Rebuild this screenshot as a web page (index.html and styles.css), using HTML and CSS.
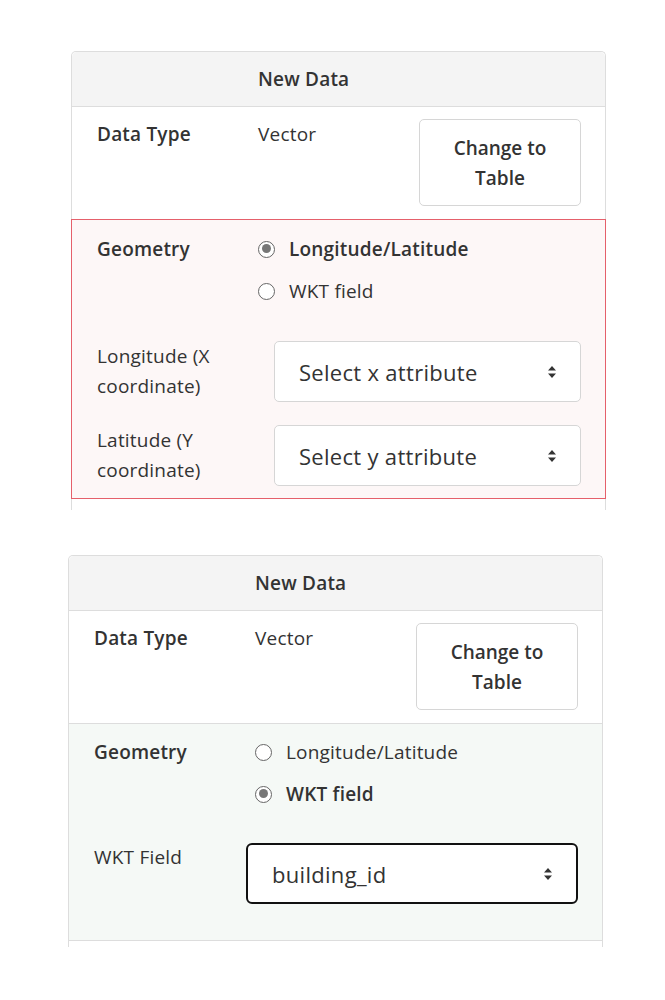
FILE: index.html
```html
<!DOCTYPE html>
<html lang="en">
<head>
    <meta charset="UTF-8">
    <title>New Data</title>
    <link rel="stylesheet" href="styles.css">
</head>
<body>
<div class="panel panel-first">
    <div class="panel-head">New Data</div>
    <div class="row-type">
        <div class="label">Data Type</div>
        <div class="value">Vector</div>
        <button class="btn">Change to<br>Table</button>
    </div>
    <div class="geom geom-error">
        <div class="geom-top">
            <div class="label">Geometry</div>
            <div class="radios">
                <div class="radio-row checked"><span class="radio"></span>Longitude/Latitude</div>
                <div class="radio-row"><span class="radio"></span>WKT field</div>
            </div>
        </div>
        <div class="field">
            <div class="field-label">Longitude (X<br>coordinate)</div>
            <div class="select">Select x attribute
                <svg class="arrows" width="10" height="14" viewBox="0 0 10 14"><path d="M5 1L9 5.5H1Z M5 13L9 8.5H1Z" fill="#333"/></svg>
            </div>
        </div>
        <div class="field">
            <div class="field-label">Latitude (Y<br>coordinate)</div>
            <div class="select">Select y attribute
                <svg class="arrows" width="10" height="14" viewBox="0 0 10 14"><path d="M5 1L9 5.5H1Z M5 13L9 8.5H1Z" fill="#333"/></svg>
            </div>
        </div>
    </div>
    <div class="panel-tail"></div>
</div>

<div class="panel panel-second">
    <div class="panel-head">New Data</div>
    <div class="row-type">
        <div class="label">Data Type</div>
        <div class="value">Vector</div>
        <button class="btn">Change to<br>Table</button>
    </div>
    <div class="geom geom-ok">
        <div class="geom-top">
            <div class="label">Geometry</div>
            <div class="radios">
                <div class="radio-row"><span class="radio"></span>Longitude/Latitude</div>
                <div class="radio-row checked"><span class="radio"></span>WKT field</div>
            </div>
        </div>
        <div class="field field-wkt">
            <div class="field-label">WKT Field</div>
            <div class="select select-focus">building_id
                <svg class="arrows" width="10" height="14" viewBox="0 0 10 14"><path d="M5 1L9 5.5H1Z M5 13L9 8.5H1Z" fill="#333"/></svg>
            </div>
        </div>
    </div>
    <div class="panel-tail"></div>
</div>
</body>
</html>
```

FILE: styles.css
```css
* {
    margin: 0;
    padding: 0;
    box-sizing: border-box;
}

body {
    font-family: "Open Sans", Lato, sans-serif;
    font-size: 19px;
    letter-spacing: 0.2px;
    color: #333;
    background: #fff;
}

.panel {
    width: 535px;
    border: 1px solid #ddd;
    border-bottom: none;
    border-radius: 5px 5px 0 0;
}

.panel-first {
    margin: 51px 0 0 71px;
}

.panel-second {
    margin: 45px 0 0 68px;
}

.panel-head {
    height: 55px;
    line-height: 54px;
    padding-left: 186px;
    font-weight: 600;
    background-color: #f4f4f4;
    border-bottom: 1px solid #ddd;
    border-radius: 5px 5px 0 0;
}

.row-type {
    display: flex;
    align-items: flex-start;
    padding: 12px 24px 12px 25px;
    height: 112px;
}

.label {
    width: 161px;
    font-weight: 600;
    line-height: 30px;
}

.value {
    flex: 1;
    line-height: 30px;
}

.btn {
    width: 162px;
    height: 87px;
    font: inherit;
    font-weight: 600;
    color: #333;
    line-height: 30px;
    background: #fff;
    border: 1px solid #d6d6d6;
    border-radius: 5px;
}

.geom {
    padding: 14px 24px 12px 25px;
}

.geom-error {
    background-color: #fdf7f7;
    border: 1px solid #e5606b;
    margin: 0 -1px;
}

.geom-ok {
    background-color: #f5f9f6;
    border-top: 1px solid #ddd;
    border-bottom: 1px solid #ddd;
    padding-top: 13px;
    padding-bottom: 36px;
}

.geom-top {
    display: flex;
}

.radio-row {
    display: flex;
    align-items: center;
    height: 30px;
    margin-bottom: 12px;
}

.radio-row:last-child {
    margin-bottom: 0;
}

.radio-row.checked {
    font-weight: 600;
}

.radio {
    width: 17px;
    height: 17px;
    margin: 0 14px 0 0;
    border: 1.5px solid #666;
    border-radius: 50%;
    background: #fff;
    position: relative;
}

.checked .radio::after {
    content: "";
    position: absolute;
    left: 2.5px;
    top: 2.5px;
    width: 9px;
    height: 9px;
    border-radius: 50%;
    background: #777;
}

.field {
    display: flex;
    margin-top: 35px;
}

.field + .field {
    margin-top: 23px;
}

.field-label {
    width: 177px;
    line-height: 30px;
}

.field-wkt {
    margin-top: 34px;
}

.field-wkt .field-label {
    width: 152px;
    margin-top: -1px;
}

.select {
    flex: 1;
    height: 61px;
    display: flex;
    align-items: center;
    justify-content: space-between;
    padding: 0 23px 0 24px;
    font-size: 22px;
    letter-spacing: 0.3px;
    background: #fff;
    border: 1px solid #d6d6d6;
    border-radius: 5px;
}

.select-focus {
    border: 2px solid #111;
    border-radius: 6px;
}

.panel-tail {
    height: 11px;
}

.panel-second .panel-tail {
    height: 6px;
}
```
